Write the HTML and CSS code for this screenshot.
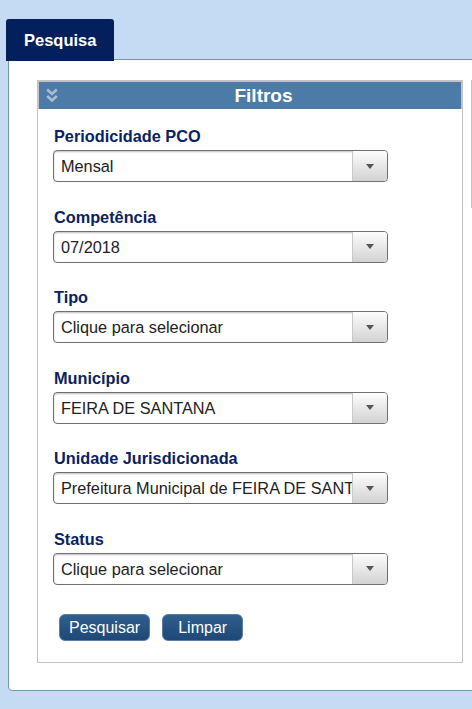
FILE: index.html
```html
<!DOCTYPE html>
<html lang="pt-BR">
<head>
<meta charset="utf-8">
<title>Pesquisa</title>
<link rel="stylesheet" href="styles.css">
</head>
<body>
<div class="page">
  <div class="tab">Pesquisa</div>
  <div class="panel">
    <div class="filters">
      <div class="filters-head">
        <span class="filters-icon">
          <svg width="12" height="15" viewBox="0 0 12 15" aria-hidden="true">
            <polyline points="1.2,1.5 6,6 10.8,1.5" fill="none" stroke="#a9bdd4" stroke-width="2.6"/>
            <polyline points="1.2,8 6,12.5 10.8,8" fill="none" stroke="#a9bdd4" stroke-width="2.6"/>
          </svg>
        </span>
        <span class="filters-title">Filtros</span>
      </div>
      <div class="filters-body">
        <div class="field">
          <div class="field-label">Periodicidade PCO</div>
          <div class="combo"><span class="combo-text">Mensal</span><span class="combo-btn"></span></div>
        </div>
        <div class="field">
          <div class="field-label">Competência</div>
          <div class="combo"><span class="combo-text">07/2018</span><span class="combo-btn"></span></div>
        </div>
        <div class="field">
          <div class="field-label">Tipo</div>
          <div class="combo"><span class="combo-text">Clique para selecionar</span><span class="combo-btn"></span></div>
        </div>
        <div class="field">
          <div class="field-label">Município</div>
          <div class="combo"><span class="combo-text">FEIRA DE SANTANA</span><span class="combo-btn"></span></div>
        </div>
        <div class="field">
          <div class="field-label">Unidade Jurisdicionada</div>
          <div class="combo"><span class="combo-text">Prefeitura Municipal de FEIRA DE SANTANA</span><span class="combo-btn"></span></div>
        </div>
        <div class="field">
          <div class="field-label">Status</div>
          <div class="combo"><span class="combo-text">Clique para selecionar</span><span class="combo-btn"></span></div>
        </div>
        <div class="actions">
          <button class="btn" type="button">Pesquisar</button>
          <button class="btn" type="button">Limpar</button>
        </div>
      </div>
    </div>
    <div class="side"></div>
  </div>
</div>
</body>
</html>
```

FILE: styles.css
```css
html {
  overflow: hidden;
}

body {
  margin: 0;
  background: #c5dbf3;
  font-family: "Liberation Sans", Arial, sans-serif;
}

.page {
  padding: 19px 0 0 6px;
}

.tab {
  position: relative;
  z-index: 1;
  box-sizing: border-box;
  width: 108px;
  height: 42px;
  padding-left: 18px;
  background: #03205c;
  border-radius: 3px 3px 0 0;
  color: #fff;
  font-weight: bold;
  font-size: 16.5px;
  line-height: 42px;
}

.panel {
  display: flex;
  align-items: flex-start;
  width: 600px;
  margin: -2px 0 0 2px;
  padding: 20px 0 27px 28px;
  background: #fff;
  border: 1px solid #6f9aaa;
  border-radius: 0 0 0 4px;
}

.filters {
  box-sizing: border-box;
  width: 426px;
  border: 1px solid #c4c4c4;
}

.filters-head {
  display: flex;
  align-items: center;
  height: 27px;
  background: #4d7ba8;
  border: 1px solid #c4c4c4;
  border-bottom: 0;
}

.filters-icon {
  display: flex;
  width: 27px;
  padding-left: 7px;
  box-sizing: border-box;
}

.filters-title {
  flex: 1;
  text-align: center;
  color: #fff;
  font-weight: bold;
  font-size: 19px;
  line-height: 27px;
}

.filters-body {
  padding: 18px 15px 21px 15px;
}

.field + .field {
  margin-top: 25.5px;
}

.field-label {
  margin-bottom: 5px;
  padding-left: 1px;
  color: #0a2263;
  font-weight: bold;
  font-size: 16.3px;
  line-height: 18px;
}

.combo {
  box-sizing: border-box;
  display: flex;
  width: 335px;
  height: 32px;
  background: #fff;
  border: 1px solid #707070;
  border-radius: 4px;
  box-shadow: inset 0 1px 2px rgba(0, 0, 0, 0.25);
  overflow: hidden;
}

.combo-text {
  flex: 1;
  min-width: 0;
  padding-left: 7px;
  overflow: hidden;
  white-space: nowrap;
  color: #222;
  font-size: 16.3px;
  line-height: 30px;
}

.combo-btn {
  display: flex;
  align-items: center;
  justify-content: center;
  width: 34px;
  flex: none;
  border-left: 1px solid #c8c8c8;
  background: linear-gradient(#fdfdfd, #d2d2d2);
}

.combo-btn::after {
  content: "";
  border-left: 4px solid transparent;
  border-right: 4px solid transparent;
  border-top: 5px solid #555;
}

.actions {
  display: flex;
  gap: 12px;
  margin-top: 29px;
  padding-left: 6px;
}

.btn {
  box-sizing: border-box;
  min-width: 81px;
  height: 27px;
  padding: 0 9px;
  background: linear-gradient(#2f5f8e, #1e4877);
  border: 1px solid #5a7ea4;
  border-radius: 6px;
  color: #fff;
  font-family: "Liberation Sans", Arial, sans-serif;
  font-size: 16px;
  line-height: 25px;
}

.side {
  box-sizing: border-box;
  height: 128px;
  margin-left: 8px;
  border-left: 1px solid #c4c4c4;
}
```
